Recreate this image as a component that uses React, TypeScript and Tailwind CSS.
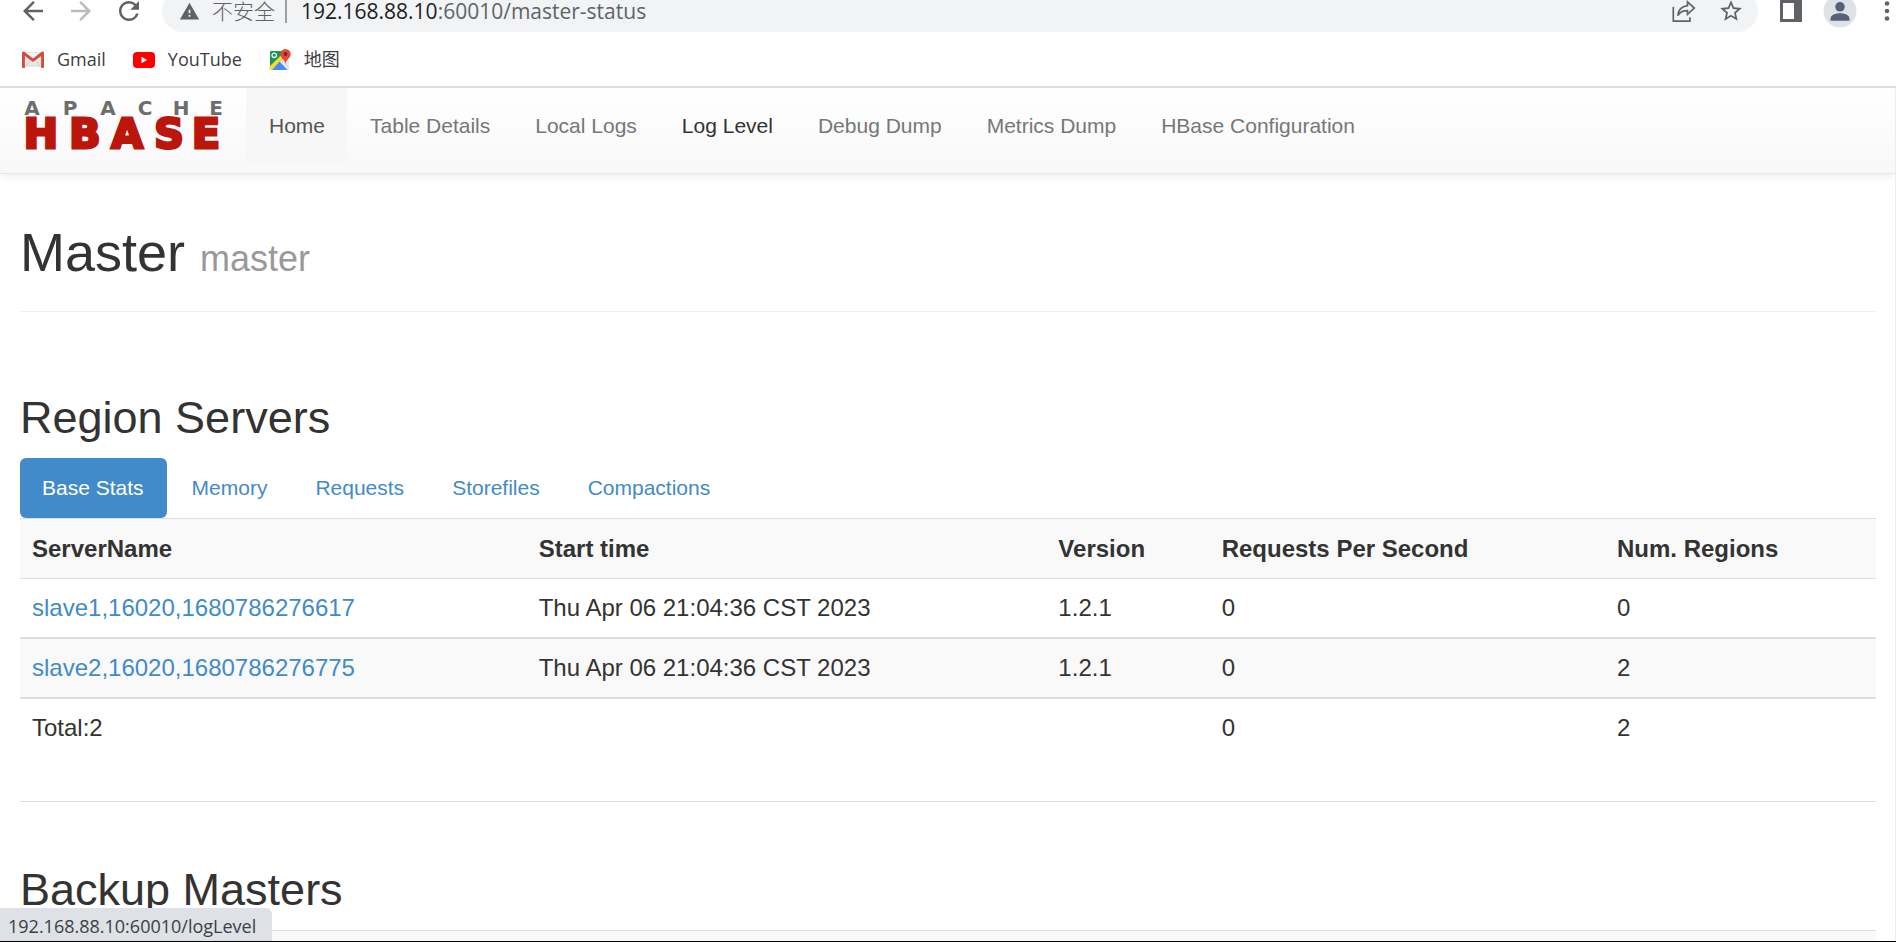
import React from "react";
import { MdArrowBack, MdArrowForward, MdRefresh, MdStarBorder, MdWarning } from "react-icons/md";

const NAV = [
  { label: "Home", tone: "bg-[#f7f7f7] text-[#555]" },
  { label: "Table Details", tone: "text-[#777]" },
  { label: "Local Logs", tone: "text-[#777]" },
  { label: "Log Level", tone: "text-[#333]" },
  { label: "Debug Dump", tone: "text-[#777]" },
  { label: "Metrics Dump", tone: "text-[#777]" },
  { label: "HBase Configuration", tone: "text-[#777]" },
];

const TABS = ["Base Stats", "Memory", "Requests", "Storefiles", "Compactions"];

const SERVERS = [
  { name: "slave1,16020,1680786276617", start: "Thu Apr 06 21:04:36 CST 2023", version: "1.2.1", rps: 0, regions: 0 },
  { name: "slave2,16020,1680786276775", start: "Thu Apr 06 21:04:36 CST 2023", version: "1.2.1", rps: 0, regions: 2 },
];

function ShareIcon() {
  return (
    <svg width="24" height="24" viewBox="0 0 24 24" fill="none" stroke="#5f6368" strokeWidth="1.7">
      <path d="M1.3 8v14.2h16.6v-4" />
      <path d="M15.500 2.800l6.800 6.200-6.800 6.400v-3.800c-4.600 0-7.600 1.400-9.700 4.900.4-5.200 3.700-9.100 9.700-9.900z" />
    </svg>
  );
}

function PanelIcon() {
  return (
    <svg width="22" height="22" viewBox="0 0 22 22">
      <path fill="#5f6368" fillRule="evenodd" d="M0 0h22v22H0zM3 3v16h11V3z" />
    </svg>
  );
}

function Avatar() {
  return (
    <svg width="34" height="34" viewBox="0 0 34 34">
      <circle cx="17" cy="17" r="16.500" fill="#dee1e6" />
      <circle cx="17" cy="12.800" r="4.800" fill="#56617a" />
      <path fill="#56617a" d="M7.500 26.800v-2.300c0-3.700 5.200-5.300 9.500-5.300s9.500 1.600 9.500 5.300v2.300z" />
    </svg>
  );
}

function GmailIcon() {
  return (
    <svg width="22" height="18" viewBox="0 0 22 18">
      <path fill="#e6e6e6" d="M1 1h20v15H1z" />
      <path fill="#f5f5f5" d="M3 2h16l-8 7z" />
      <path stroke="#cfcfcf" d="M3.500 15.500l5-6M18.500 15.500l-5-6" />
      <path fill="#d54b3d" d="M0 16V2.200C0 .7 1.200 0 2.300.8L11 7.400 19.700.8C20.800 0 22 .7 22 2.200V16a1 1 0 0 1-1 1h-1.900V5L11 11.100 2.900 5v12H1a1 1 0 0 1-1-1z" />
    </svg>
  );
}

function YouTubeIcon() {
  return (
    <svg width="22" height="16" viewBox="0 0 22 16">
      <rect width="22" height="16" rx="4" fill="#f00" />
      <path fill="#fff" d="M8.500 4.800v6.400l5.700-3.200z" />
    </svg>
  );
}

function MapsIcon() {
  return (
    <svg width="22" height="22" viewBox="0 0 22 22">
      <path fill="#e3e6e8" d="M10 12l4-4 6 4v8.500l-1.500.5z" />
      <path fill="#1c9655" d="M1.500 2H14v5L1 20.500V2.500z" />
      <path fill="#fdd835" d="M.5 17.500L14 4.500l2.500 3L3 21H.5z" />
      <path fill="#4a89f4" d="M3 21l7.500-8.500L18.500 21z" />
      <circle cx="5.200" cy="6.200" r="2.200" fill="none" stroke="#fff" strokeWidth="1.200" />
      <path fill="#e2493b" d="M16.500 0A5.200 5.200 0 0 0 11.300 5.200c0 4 4.300 4.500 5.200 9.800.9-5.300 5.200-5.800 5.200-9.800A5.200 5.200 0 0 0 16.500 0z" />
      <circle cx="16.500" cy="5" r="1.900" fill="#8b1d15" />
    </svg>
  );
}

function HBaseLogo() {
  return (
    <svg width="202" height="51" viewBox="0 0 202 51" fontFamily="DejaVu Sans" fontWeight="bold" textAnchor="middle">
      <text x="9 47 85 122 158 193" y="15" fontSize="20" fill="#6d6d6d">APACHE</text>
      <text x="18 62 104 146 183" y="48" fontSize="41" fill="#ba160c" stroke="#ba160c" strokeWidth="3">HBASE</text>
    </svg>
  );
}

function BrowserChrome() {
  return (
    <header className="shrink-0 overflow-hidden border-b-2 border-[#dadcdf] bg-white font-['Open_Sans','Noto_Sans_CJK_SC',sans-serif] text-[#5f6368]">
      <div className="-mt-[10px] flex h-[42px] items-center pr-[6px] pl-[18px]">
        <div className="flex gap-[18px] pr-[18px]">
          <button aria-label="Back"><MdArrowBack size={30} /></button>
          <button aria-label="Forward" className="text-[#babcbe]"><MdArrowForward size={30} /></button>
          <button aria-label="Reload"><MdRefresh size={30} /></button>
        </div>
        <div className="flex h-full flex-1 items-center rounded-full bg-[#f1f3f4] pr-[14px] pl-[17px]">
          <MdWarning size={21} />
          <span className="ml-3 text-[21px] leading-none font-light">不安全</span>
          <span className="ml-[10px] h-6 w-[2px] bg-[#9aa0a6]" />
          <div role="textbox" aria-label="Address" tabIndex={0} className="ml-[14px] flex-1 pt-px text-[21px] leading-none whitespace-nowrap">
            <span className="text-[#202124]">192.168.88.10</span>:60010/master-status
          </div>
          <button aria-label="Share"><ShareIcon /></button>
          <button aria-label="Bookmark" className="ml-[22px]"><MdStarBorder size={26} /></button>
        </div>
        <button aria-label="Side panel" className="ml-[22px]"><PanelIcon /></button>
        <button aria-label="Profile" className="ml-[21px]"><Avatar /></button>
        <button aria-label="Menu" className="ml-[27px]">
          <svg width="6" height="22" viewBox="0 0 6 22" fill="#5f6368">
            <circle cx="3" cy="3.500" r="2.300" />
            <circle cx="3" cy="11" r="2.300" />
            <circle cx="3" cy="18.500" r="2.300" />
          </svg>
        </button>
      </div>
      <div className="flex h-[54px] items-center gap-[27px] pt-px pl-[22px] text-[18px] text-[#3c4043]">
        <a href="#gmail" className="flex items-center gap-[13px]"><GmailIcon />Gmail</a>
        <a href="#youtube" className="flex items-center gap-[13px]"><YouTubeIcon />YouTube</a>
        <a href="#maps" className="flex items-center gap-[13px]"><MapsIcon />地图</a>
      </div>
    </header>
  );
}

export default function App() {
  return (
    <div className="relative flex h-screen flex-col overflow-hidden border-b border-black bg-white font-['Liberation_Sans',Arial,sans-serif] text-[#333]">
      <BrowserChrome />
      <div className="min-h-0 flex-1 overflow-hidden border-r border-[#ececec]">
        <nav className="flex h-[86px] items-start border-b border-[#e7e7e7] bg-linear-to-b from-white to-[#f8f8f8] pl-[23px] shadow-[0_2px_8px_rgba(0,0,0,0.075)]">
          <a href="#home" aria-label="Apache HBase" className="mt-3 mr-[21px]"><HBaseLogo /></a>
          {NAV.map((n) => (
            <a key={n.label} href="#nav" className={`pt-[23px] pr-[22px] pb-[22px] pl-[23px] text-[21px] leading-[30px] ${n.tone}`}>{n.label}</a>
          ))}
        </nav>
        <main className="pt-12 pr-[19px] pl-5">
          <h1 className="border-b border-[#eee] pb-[29px] text-[54px] leading-[60px]">
            Master <small className="text-[36px] leading-none text-[#999]">master</small>
          </h1>
          <section className="pt-[81px]">
            <h2 className="text-[45px] leading-[50px]">Region Servers</h2>
            <div role="tablist" className="mt-[15px] flex gap-[3px]">
              {TABS.map((t, i) => (
                <button
                  key={t}
                  role="tab"
                  aria-selected={i === 0}
                  className={`h-[60px] rounded-md pr-[23px] pl-[22px] text-[21px] ${i === 0 ? "bg-[#428bca] text-white" : "text-[#428bca]"}`}
                >
                  {t}
                </button>
              ))}
            </div>
            <table className="w-full table-fixed border-separate border-spacing-0 text-left text-[24px] leading-[34px] [&_td]:border-[#ddd] [&_td]:px-3 [&_th]:border-t [&_th]:border-[#ddd] [&_th]:px-3">
              <thead>
                <tr className="h-[60px] bg-[#f9f9f9]">
                  <th className="w-[27.3%]">ServerName</th>
                  <th className="w-[28%]">Start time</th>
                  <th className="w-[8.8%]">Version</th>
                  <th className="w-[21.3%]">Requests Per Second</th>
                  <th>Num. Regions</th>
                </tr>
              </thead>
              <tbody>
                {SERVERS.map((s, i) => (
                  <tr key={s.name} className={i === 0 ? "h-[59px] [&>td]:border-t" : "h-[60px] bg-[#f9f9f9] [&>td]:border-t-2"}>
                    <td><a href="#server" className="text-[#428bca]">{s.name}</a></td>
                    <td>{s.start}</td>
                    <td>{s.version}</td>
                    <td>{s.rps}</td>
                    <td>{s.regions}</td>
                  </tr>
                ))}
                <tr className="h-[60px] [&>td]:border-t-2">
                  <td>Total:2</td>
                  <td />
                  <td />
                  <td>0</td>
                  <td>2</td>
                </tr>
              </tbody>
            </table>
          </section>
          <section className="mt-11 border-t border-[#ddd] pt-[63px]">
            <h2 className="text-[45px] leading-[50px]">Backup Masters</h2>
            <div className="mt-[15px] h-[60px] border-t border-[#ddd] bg-[#f9f9f9]" />
          </section>
        </main>
      </div>
      <div className="absolute bottom-0 left-0 flex h-[33px] items-center rounded-tr-md bg-[#dee1e6] pt-1 pr-4 pl-2 font-['Open_Sans',sans-serif] text-[18px] text-[#3c4043]">
        192.168.88.10:60010/logLevel
      </div>
    </div>
  );
}
